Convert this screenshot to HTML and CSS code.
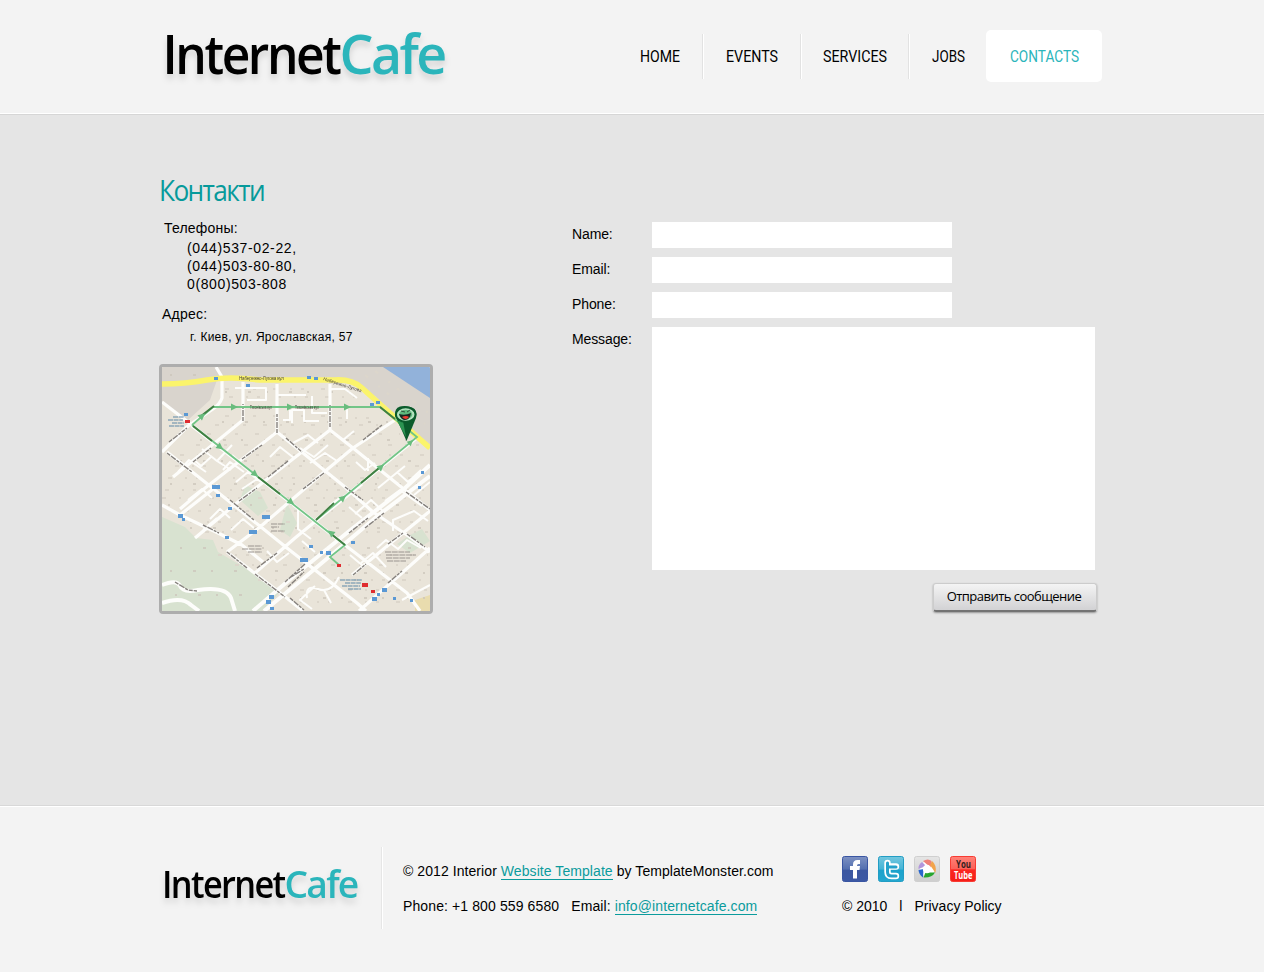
FILE: index.html
```html
<!DOCTYPE html>
<html lang="ru">
<head>
<meta charset="utf-8">
<title>InternetCafe</title>
<link rel="stylesheet" href="styles.css">
</head>
<body>
<header class="header">
  <div class="wrap header-row">
    <a class="logo" href="#"><svg width="296" height="68" viewBox="159 24 296 68"><g class="logo-text" font-size="53.5"><text x="162.500" y="74" textLength="177" lengthAdjust="spacingAndGlyphs">Internet</text><text class="logo-cafe" x="339.500" y="74" textLength="105" lengthAdjust="spacingAndGlyphs">Cafe</text></g></svg></a>
    <nav class="nav">
      <a class="home" href="#"><svg width="42" height="20"><text x="0" y="16" textLength="40" lengthAdjust="spacingAndGlyphs">HOME</text></svg></a>
      <a class="events" href="#"><svg width="54" height="20"><text x="0" y="16" textLength="52" lengthAdjust="spacingAndGlyphs">EVENTS</text></svg></a>
      <a class="services" href="#"><svg width="66" height="20"><text x="0" y="16" textLength="64" lengthAdjust="spacingAndGlyphs">SERVICES</text></svg></a>
      <a class="jobs" href="#"><svg width="35" height="20"><text x="0" y="16" textLength="33" lengthAdjust="spacingAndGlyphs">JOBS</text></svg></a>
      <a class="contacts" href="#"><svg width="71" height="20"><text x="1" y="16" textLength="69" lengthAdjust="spacingAndGlyphs">CONTACTS</text></svg></a>
    </nav>
  </div>
</header>
<main class="main">
  <div class="wrap content">
    <section class="info">
      <h1 class="title"><svg width="112" height="36"><text x="0" y="27" textLength="105" lengthAdjust="spacingAndGlyphs">Контакти</text></svg></h1>
      <p class="label phones-label">Телефоны:</p>
      <p class="phones">(044)537-02-22,<br>(044)503-80-80,<br>0(800)503-808</p>
      <p class="label address-label">Адрес:</p>
      <p class="address">г. Киев, ул. Ярославская, 57</p>
      <div class="map">
        <svg width="268" height="244" viewBox="162 367 268 244">
          <rect x="162" y="367" width="268" height="244" fill="#e9e4d9"/>
          <g class="map-soft">
            <path fill="#d9d4cd" d="M162 367H430V447L375 396 350 382 217 380 210 400 188 420 162 404Z"/>
            <path fill="#92b2da" d="M383 367H430V398Z"/>
            <path fill="#d8e2d0" d="M162 517L185 527 196 538 213 540 218 552 235 562 258 574 280 592 262 611H162ZM245 485l15 7 8 16-10 8-18-16ZM287 503l10 20-7 14-10-7ZM410 535l12-6 8 12-20 12-13-9Z"/>
            <path fill="#e9dcae" d="M415 600l15-5v16h-15Z"/>
            <g fill="none" stroke="#dcd6cb" stroke-width="2.2" stroke-dasharray="4 13 2 9 3 17">
              <path d="M225 389H370M229 397H360M225 416H326M338 418H382M215 425H385M207 434H400M196 445H420M180 455H428M175 466H428M168 478H425M165 490H430M162 498H428M170 511H430M190 522H430M205 532H430M218 555H428M235 565H430M258 580H430M300 590H428M300 602H400M365 375L425 424M375 371L430 414"/>
              <path stroke="#cbc5bb" stroke-width="1.3" stroke-dasharray="2 21 3 15" d="M170 375H210M225 392H370M222 422H390M200 440H425M180 461H425M170 484H425M168 505H425M190 528H425M180 548H425M170 571H290M300 573H425M175 595H250M300 598H425"/>
            </g>
            <g fill="none" stroke="#fdfdfb" stroke-width="3.2" stroke-linejoin="round">
              <path d="M216 367L222 377V398Q220 404 213 409L188 426 162 452M162 402L188 422 209 439M243 382V420L173 477M277 384V432L200 492 180 509M330 384V430L238 502 195 538M167 452L215 490 287 548 357 603 366 611M277 432L303 453 345 487 373 512 407 535 430 552M330 430L353 448 390 478 430 510M395 420L353 448 323 473 260 527 227 552M218 485L180 515M162 505L180 515 218 533 242 545 263 562M227 552L283 595 303 611M255 573L295 538 317 520 362 484M345 545L407 593 420 611M352 575L403 533 430 511M359 611L403 572 430 548M192 426L345 545M316 520L418 437"/>
              <path stroke-width="4" d="M253 611L295 575 353 528 405 488 430 465M264 611L298 583 380 514 430 476M162 585Q177 579 180 586T198 590Q226 586 231 598L235 611M162 603Q182 596 191 605L199 611"/>
              <path stroke-width="2" d="M235 388H266V400H247M277 395H306M290 410V420H283M292 423V410H304V421H319M312 396V413H327M330 389H345L357 398M347 409V419M178 472L189 460 206 472M193 459L201 466 211 457M202 449L217 461 232 445M217 461L231 470M232 455L240 462M223 470L230 462 244 472M236 482L248 472 261 482M270 457L280 447 294 458M293 443L308 435 318 443M300 448L314 457 328 445M310 463L325 453 337 461M343 440L354 431M356 462L365 470 375 463M368 458V471M378 488L405 466M397 472L408 482 421 470M385 501L400 490 422 506M393 531V520L414 511 428 521M377 548L386 540 398 549 407 540 421 548M361 563L373 553 386 567M350 555L363 566M298 508V529L311 539M302 541L315 552M315 586L300 600 312 609M307 598Q305 584 318 589T339 577M324 590L331 603M267 551L277 562 289 553M231 530L243 519 254 528M210 519L220 509 230 518M203 530L217 518M188 500L202 489 212 498M242 489L260 477M355 514L371 500 384 512M330 505L341 497M349 507L362 518M414 495L430 482M402 600L430 585"/>
            </g>
            <path fill="none" stroke="#fbf46b" stroke-width="5.6" d="M162 384Q185 384 207 380T260 380H335Q352 379 362 388L382 406 430 448"/>
            <g fill="none" stroke="#85807c" stroke-width="1.4" stroke-dasharray="4 1 6 1 3 1">
              <path d="M169 442L187 428M167 453L192 472M193 462L211 448M243 421V404M277 433V414M330 427V405M230 500L254 520M242 459L262 445M268 477L288 461M286 438L302 452M345 487L363 500M303 489L324 473M363 440L382 425M203 525L219 533M239 501L257 488M227 552L247 568M257 568L277 553M255 574L285 597M349 533L368 518M365 528L384 513M353 575L366 564M388 544L403 533M388 583L402 571M288 587L304 572M291 577L304 569M290 598L304 610M406 492L430 509M407 534L425 547M175 582L188 590 197 591M285 582L305 564"/>
            </g>
            <g class="route"><path d="M192 425L213 407M213 407H380L417 437 316 520M192 425L345 545 330 557 339 565"/></g>
            <path fill="none" stroke="#407e42" stroke-width="1.8" d="M193 426L212 441M201 416L214 406M258 477L280 494M380 407L395 419M361 483L379 468M316 520L334 503M330 533L345 545"/>
            <g fill="#69bc7d">
              <path d="M231 403.500l7 3.500-7 3.500ZM287 403.500l7 3.500-7 3.500ZM344 403.500l7 3.500-7 3.500Z"/>
              <path transform="translate(202 416) rotate(-40)" d="M-3-3.500L4 0-3 3.500Z"/>
              <path transform="translate(220 447) rotate(38)" d="M-3-3.500L4 0-3 3.500Z"/>
              <path transform="translate(255 474) rotate(38)" d="M-3-3.500L4 0-3 3.500Z"/>
              <path transform="translate(291 502) rotate(38)" d="M-3-3.500L4 0-3 3.500Z"/>
              <path transform="translate(331 533) rotate(218)" d="M-3-3.500L4 0-3 3.500Z"/>
              <path transform="translate(343 498) rotate(-40)" d="M-3-3.500L4 0-3 3.500Z"/>
              <path transform="translate(381 467) rotate(-40)" d="M-3-3.500L4 0-3 3.500Z"/>
              <path transform="translate(411 442) rotate(-40)" d="M-3-3L3 0-3 3Z"/>
            </g>
            <g fill="#5a98d4"><path d="M214 377h4v3h-4ZM246 384h4v3h-4ZM307 376h4v3h-4ZM314 377h4v3h-4ZM370 403h4v3h-4ZM376 401h4v3h-4ZM184 413h4v3h-4ZM212 485h8v4h-8ZM216 494h4v3h-4ZM228 507h4v3h-4ZM178 514h5v4h-5ZM182 518h3v3h-3ZM262 515h8v4h-8ZM249 530h8v4h-8ZM225 536h4v3h-4ZM326 551h5v4h-5ZM320 551h3v3h-3ZM309 545h4v3h-4ZM300 558h8v4h-8ZM351 541h4v3h-4ZM269 595h5v4h-5ZM266 600h5v4h-5ZM270 607h4v3h-4ZM382 588h5v4h-5ZM372 597h5v4h-5ZM377 593h3v3h-3ZM393 597h3v3h-3ZM410 599h3v3h-3ZM421 471h3v3h-3ZM418 486h3v3h-3Z"/></g>
            <g fill="#df2d30"><path d="M185 420h5v3h-5ZM362 583h6v4h-6ZM337 564h4v3h-4ZM371 590h4v3h-4Z"/></g>
            <g stroke="#5f87a8" stroke-width="1.2" stroke-dasharray="5 .6"><path d="M173 417h11M168 420h15M172 423h12M169 426h15M340 580h22M345 583h16M342 586h18M348 589h13"/></g>
            <g stroke="#9a948f" stroke-width="1" stroke-dasharray="6 .7"><path d="M271 524h14M271 527h8M271 531h14M248 546h14M242 549h20M248 552h14M385 552h25M386 555h30M386 558h24M387 561h19"/></g>
            <g class="map-names"><text x="239" y="380" textLength="45">Набережно-Лугова вул</text><text x="250" y="409" textLength="22" lengthAdjust="spacingAndGlyphs">Тихонівська вул</text><text x="295" y="409" textLength="24" lengthAdjust="spacingAndGlyphs">Тихонівська вул</text><text x="323" y="380" textLength="40" transform="rotate(18 323 380)">Набережно-Лугова</text></g>
          </g>
          <path fill="#0b5b2c" d="M395.500 416Q394 408 400 406.500Q406 405 412 407.500Q418 410 416 418L406.500 441Z"/>
          <path fill="#2c9452" d="M397 421L406 437 403 421Z"/>
          <ellipse cx="405.700" cy="414.500" rx="9.800" ry="7.200" fill="#b5e2c0" stroke="#0b5b2c" stroke-width="2"/>
          <ellipse cx="405.700" cy="414.500" rx="6.600" ry="4.700" fill="#5fb87d"/>
          <path fill="#162820" d="M399 414q6 2 12-1-1 7-6 7-4 0-6-6"/><path fill="#ef3b31" d="M402 417q4-2 7 0-3 4-7 0"/><path stroke="#17211c" stroke-width=".7" d="M401 411l4 1M407 412l3-2"/>
        </svg>
      </div>
    </section>
    <form class="form">
      <label class="row"><span>Name:</span><input class="field" type="text"></label>
      <label class="row"><span>Email:</span><input class="field" type="text"></label>
      <label class="row"><span>Phone:</span><input class="field" type="text"></label>
      <label class="row"><span>Message:</span><textarea class="message"></textarea></label>
      <button class="send" type="button">Отправить сообщение</button>
    </form>
  </div>
</main>
<footer class="footer">
  <div class="wrap footer-row">
    <a class="footer-logo" href="#"><svg width="223" height="60" viewBox="159 856 223 60"><g class="logo-text small" font-size="37.500"><text x="162" y="898" textLength="122.500" lengthAdjust="spacingAndGlyphs">Internet</text><text class="logo-cafe" x="284.500" y="898" textLength="73" lengthAdjust="spacingAndGlyphs">Cafe</text></g></svg></a>
    <div class="legal">
      <p class="copyright">© 2012 Interior <a href="#">Website Template</a> by TemplateMonster.com</p>
      <p class="reach">Phone: +1 800 559 6580<span class="mail">Email: <a href="#">info@internetcafe.com</a></span></p>
    </div>
    <div class="social">
      <div class="icons">
        <svg width="26" height="26" viewBox="0 0 26 26"><defs><linearGradient id="fb" x2="0" y2="1"><stop stop-color="#7d91c2"/><stop offset=".5" stop-color="#5470b0"/><stop offset=".55" stop-color="#3c57a0"/><stop offset="1" stop-color="#3c58a4"/></linearGradient></defs><rect x=".5" y=".5" width="25" height="25" rx="2" fill="url(#fb)" stroke="#3955a2"/><path d="M11 22.500V14H8v-4h3V8.500q0-4.500 4.500-4.500H18v4h-1.500q-1.500 0-1.500 1.500v.5h3l-.5 4H15v8.500Z" fill="#fff"/></svg>
        <svg width="26" height="26" viewBox="0 0 26 26"><defs><linearGradient id="tw" x2="0" y2="1"><stop stop-color="#73c7df"/><stop offset=".5" stop-color="#45b4d6"/><stop offset=".55" stop-color="#1ca2cc"/><stop offset="1" stop-color="#23a7cf"/></linearGradient></defs><rect x=".5" y=".5" width="25" height="25" rx="2" fill="url(#tw)" stroke="#229dc4"/><path d="M9.500 7V16q0 4 4 4H18M9.500 10.500H18" fill="none" stroke="#fff" stroke-width="6.400" stroke-linecap="round" stroke-linejoin="round"/><path d="M9.500 7V16q0 4 4 4H18M9.500 11H18" fill="none" stroke="#25a1ca" stroke-width="3" stroke-linecap="round" stroke-linejoin="round"/></svg>
        <svg width="26" height="26" viewBox="0 0 26 26"><defs><linearGradient id="pc" x2="0" y2="1"><stop stop-color="#e5e5e5"/><stop offset="1" stop-color="#cecece"/></linearGradient></defs><rect x=".5" y=".5" width="25" height="25" rx="2" fill="url(#pc)" stroke="#cfcfcf"/><circle cx="13" cy="13" r="7.500" fill="#fff"/><path fill="#ef8178" d="M9 5q5-3 8.500 0l-.5 7L9 5Z"/><path fill="#f2a44c" d="M18 5q5 4 3.500 12L16 9Z"/><path fill="#28a62e" d="M21 16.500Q18 22 9.500 21.500l2-5Z"/><path fill="#2966cc" d="M9 21.500Q5 19 4.500 14l5-1Z"/><path fill="#b296dc" d="M4.500 13Q4 9 8 6l4 4Z"/><circle cx="13" cy="13" r="4.200" fill="#fff"/></svg>
        <svg width="26" height="26" viewBox="0 0 26 26"><defs><linearGradient id="yt" x2="0" y2="1"><stop stop-color="#ff8278"/><stop offset=".5" stop-color="#fb6058"/><stop offset=".53" stop-color="#fb2720"/><stop offset="1" stop-color="#f51e18"/></linearGradient></defs><rect x=".5" y=".5" width="25" height="25" rx="2" fill="url(#yt)" stroke="#f83b33"/><g class="yt-text"><text x="6" y="12" textLength="15" lengthAdjust="spacingAndGlyphs" fill="#351f1e">You</text><text x="4" y="23" textLength="18.500" lengthAdjust="spacingAndGlyphs" fill="#fff">Tube</text></g></svg>
      </div>
      <p class="policy"><span>© 2010</span><span>l</span><span>Privacy Policy</span></p>
    </div>
  </div>
</footer>
</body>
</html>
```
FILE: styles.css
```css
* { box-sizing: border-box; }
body { margin: 0; background: #f3f3f3; color: #000; font: 14px/18px "Liberation Sans", Arial, sans-serif; }
p, h1 { margin: 0; }
a { color: #0b9b9d; text-decoration: none; }
svg { display: block; overflow: visible; }
.wrap { width: 943px; margin-left: 159px; }

.header { height: 114px; border-bottom: 1px solid #fff; }
.header-row { display: flex; justify-content: space-between; }
.logo { padding-top: 24px; }
.logo-text { font-family: "Open Sans", "Noto Sans", sans-serif; font-weight: 600; letter-spacing: -2.6px; filter: drop-shadow(0 5px 3px rgba(0, 0, 0, .13)); }
.logo-text.small { letter-spacing: -1.8px; }
.logo-cafe { fill: #2bb5bb; }
.nav { display: flex; padding-top: 30px; font: 17px Roboto, sans-serif; }
.nav a { display: flex; height: 52px; padding-top: 16px; position: relative; fill: #000; }
.nav .home { width: 63px; }
.nav .events { width: 98px; padding-left: 23px; }
.nav .services { width: 108px; padding-left: 22px; }
.nav .jobs { width: 77px; padding-left: 23px; }
.nav .contacts { width: 116px; padding-left: 23px; border-radius: 5px; background: #fff; fill: #2bb5bb; }
.nav .home::after, .nav .events::after, .nav .services::after { content: ""; position: absolute; right: -1px; top: 4px; width: 2px; height: 45px; background: linear-gradient(90deg, #e2e2e2 50%, #fff 50%); }

.main { height: 692px; border-top: 1px solid #d6d6d6; border-bottom: 1px solid #d8d8d8; background: #e5e5e5; }
.content { display: flex; padding-top: 59px; }
.info { width: 413px; }
.title { height: 45px; font: 400 29px/1 "Open Sans", sans-serif; letter-spacing: -1.8px; fill: #079a9b; }
.phones-label { padding-left: 5px; height: 20px; letter-spacing: .2px; }
.phones { padding-left: 28px; letter-spacing: .62px; height: 66px; }
.address-label { padding-left: 3px; height: 23px; letter-spacing: .25px; }
.address { padding-left: 31px; height: 36px; font-size: 12px; letter-spacing: .27px; }
.map { width: 274px; height: 250px; border: 3px solid #adadad; border-radius: 4px; overflow: hidden; }
.map svg { overflow: hidden; }
.map-soft { filter: blur(.5px); }
.map-names { font: 4.5px "Liberation Sans", sans-serif; fill: #4a443c; }
.route path { fill: none; stroke: #73c587; stroke-width: 1.8; }

.form { width: 525px; padding-top: 48px; display: flex; flex-direction: column; gap: 9px; }
.row { display: flex; letter-spacing: -.12px; }
.row span { width: 80px; padding-top: 3px; }
.field, .message { display: block; margin: 0; border: 0; padding: 4px; background: #fff; resize: none; font: inherit; }
.field { width: 300px; height: 26px; }
.message { width: 443px; height: 243px; }
.send { align-self: flex-end; width: 164px; height: 29px; margin: 4px 0 0; padding: 0 2px 2px 0; border: 1px solid #ccc; border-bottom: 2px solid #737373; border-radius: 3px; background: linear-gradient(#f4f4f4, #d2d2d4); box-shadow: 0 1px 2px rgba(0, 0, 0, .35); color: #000; font: 13px "Open Sans", sans-serif; letter-spacing: -.53px; }

.footer { height: 166px; border-top: 1px solid #fff; }
.footer-row { display: flex; padding-top: 40px; }
.footer-logo { width: 224px; height: 82px; padding-top: 9px; border-right: 1px solid #fff; box-shadow: inset -1px 0 #e6e6e6; }
.legal { width: 459px; padding: 15px 0 0 20px; display: flex; flex-direction: column; gap: 17px; white-space: nowrap; }
.legal a { display: inline-block; height: 18px; border-bottom: 1px solid #0b9b9d; }
.legal p { height: 18px; }
.copyright { letter-spacing: .07px; }
.reach { letter-spacing: .11px; }
.mail { margin-left: 12px; }
.social { padding-top: 9px; }
.icons { display: flex; gap: 10px; height: 41px; }
.policy { display: flex; gap: 12px; white-space: nowrap; }
.yt-text { font: bold 11px "Open Sans", sans-serif; }
```
